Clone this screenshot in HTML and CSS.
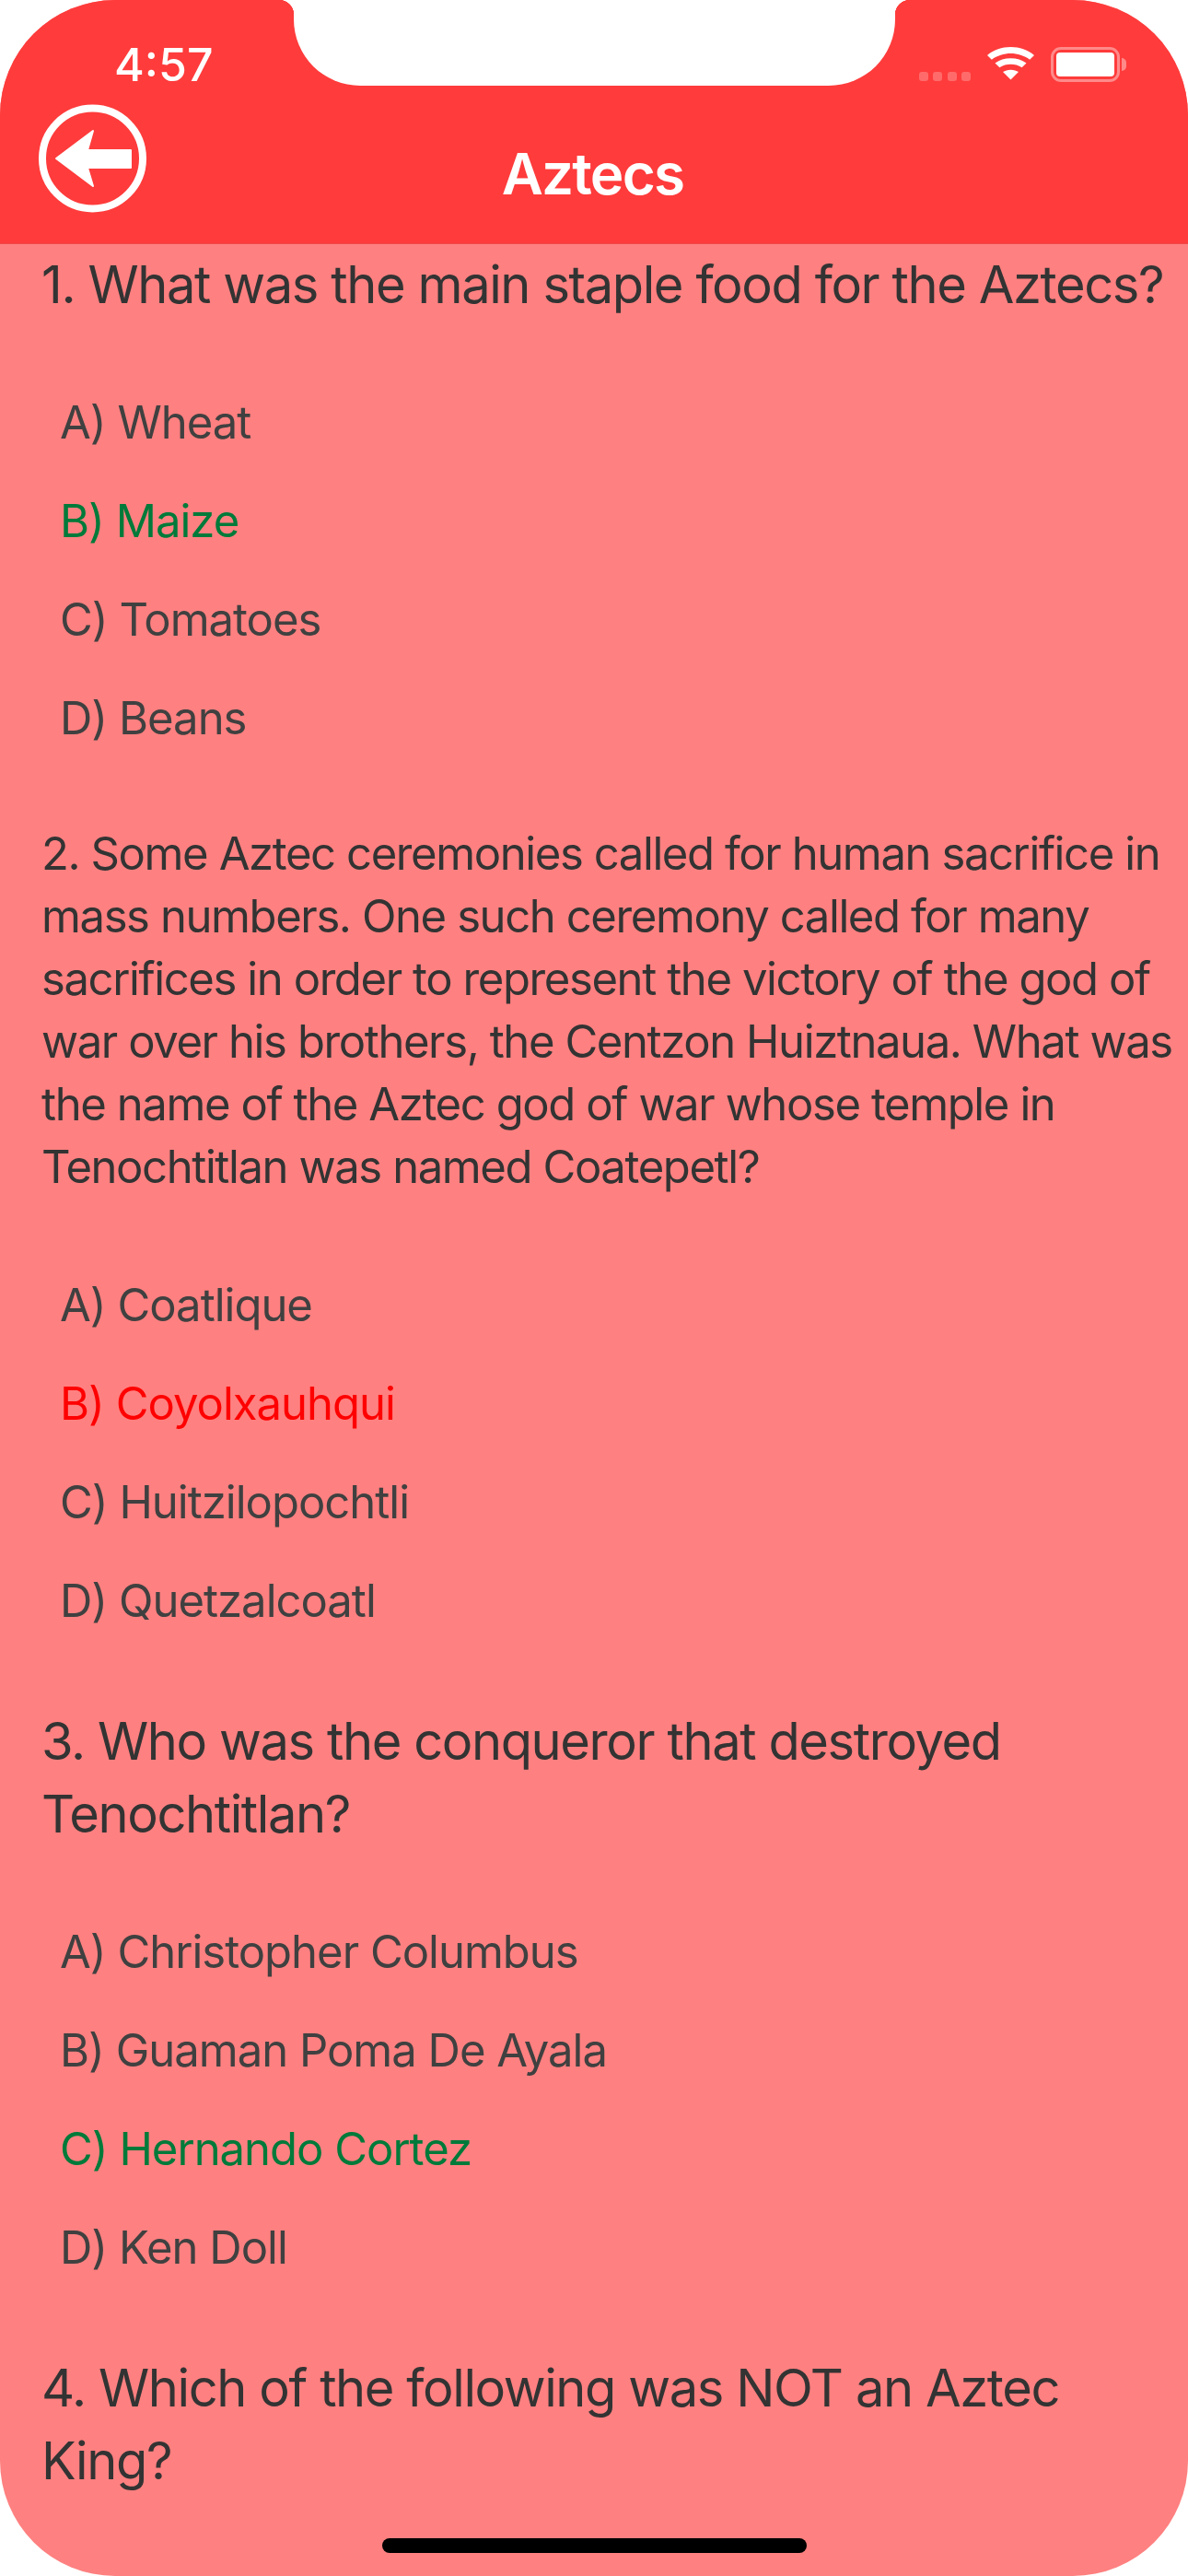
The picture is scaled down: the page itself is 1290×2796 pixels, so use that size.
FILE: index.html
```html
<!DOCTYPE html>
<html lang="en">
<head>
    <meta charset="UTF-8">
    <meta name="viewport" content="width=device-width, initial-scale=1.0">
    <title>Aztecs</title>
    <link rel="stylesheet" href="styles.css">
</head>
<body>
    <div class="phone">
        <div class="header">
            <div class="status-bar">
                <span class="time">4:57</span>
                <div class="status-icons">
                    <div class="signal"><i></i><i></i><i></i><i></i></div>
                    <svg class="wifi" viewBox="0 0 42 38" width="51" height="36" preserveAspectRatio="none">
                        <path fill="#fff" d="M21 0C13 0 6 3 0 9.500L4 14.500C9 10 15 7.500 21 7.500S33 10 38 14.500L42 9.500C36 3 29 0 21 0Z"/>
                        <path fill="#fff" d="M21 13C15.500 13 11 15 7 18.500L11 23.500C14 21 17.500 19.800 21 19.800S28 21 31 23.500L35 18.500C31 15 26.500 13 21 13Z"/>
                        <path fill="#fff" d="M21 26C18 26 16 27 14 28.500L21 37.500L28 28.500C26 27 24 26 21 26Z"/>
                    </svg>
                    <div class="battery"><div class="battery-level"></div></div>
                    <div class="battery-cap"></div>
                </div>
            </div>
            <div class="nav-bar">
                <svg class="back-btn" viewBox="0 0 118 118" width="118" height="118">
                    <circle cx="58.500" cy="59" r="54.500" fill="none" stroke="#fff" stroke-width="8"/>
                    <path fill="#fff" stroke="#fff" stroke-width="2" stroke-linejoin="round" d="M19 59L59 29L53 50H100V69H53L59 89Z"/>
                </svg>
                <h1 class="title">Aztecs</h1>
            </div>
        </div>
        <div class="notch"></div>

        <div class="quiz">
            <div class="question">
                <p class="q-large">1. What was the main staple food for the Aztecs?</p>
                <ul class="answers">
                    <li>A) Wheat</li>
                    <li class="correct">B) Maize</li>
                    <li>C) Tomatoes</li>
                    <li>D) Beans</li>
                </ul>
            </div>
            <div class="question">
                <p class="q-small">2. Some Aztec ceremonies called for human sacrifice in mass numbers. One such ceremony called for many sacrifices in order to represent the victory of the god of war over his brothers, the Centzon Huiztnaua. What was the name of the Aztec god of war whose temple in Tenochtitlan was named Coatepetl?</p>
                <ul class="answers">
                    <li>A) Coatlique</li>
                    <li class="wrong">B) Coyolxauhqui</li>
                    <li>C) Huitzilopochtli</li>
                    <li>D) Quetzalcoatl</li>
                </ul>
            </div>
            <div class="question">
                <p class="q-large">3. Who was the conqueror that destroyed Tenochtitlan?</p>
                <ul class="answers">
                    <li>A) Christopher Columbus</li>
                    <li>B) Guaman Poma De Ayala</li>
                    <li class="correct">C) Hernando Cortez</li>
                    <li>D) Ken Doll</li>
                </ul>
            </div>
            <div class="question">
                <p class="q-large">4. Which of the following was NOT an Aztec King?</p>
            </div>
        </div>
        <div class="home-bar"></div>
    </div>
</body>
</html>
```

FILE: styles.css
```css
html, body {
    margin: 0;
    padding: 0;
    background: #fff;
}
.phone {
    position: relative;
    width: 1290px;
    height: 2796px;
    overflow: hidden;
    border-radius: 125px;
    background: #ff8080;
    font-family: Inter, "Noto Sans", sans-serif;
    color: #333;
}
.header {
    height: 265px;
    box-sizing: border-box;
    background: #ff3b3b;
    border-bottom: 1px solid #f04a4a;
    color: #fff;
}
.status-bar {
    display: flex;
    justify-content: space-between;
    height: 93px;
}
.time {
    margin: 42px 0 0 124px;
    font-size: 50px;
    line-height: 56px;
    font-weight: 500;
}
.status-icons {
    display: flex;
    align-items: flex-start;
    margin: 51px 67px 0 0;
}
.signal {
    display: flex;
    gap: 5.300px;
    margin: 27px 18px 0 0;
}
.signal i {
    width: 10px;
    height: 10px;
    border-radius: 3px;
    background: #ff6b6b;
}
.wifi {
    margin-right: 18px;
}
.battery {
    width: 75px;
    height: 38px;
    box-sizing: border-box;
    padding: 3px;
    border: 3px solid #ff8a8a;
    border-radius: 11px;
}
.battery-level {
    height: 100%;
    border-radius: 4px;
    background: #fff;
}
.battery-cap {
    width: 5px;
    height: 14px;
    margin: 12px 0 0 2px;
    border-radius: 0 5px 5px 0;
    background: #ff8a8a;
}
.nav-bar {
    position: relative;
    height: 171px;
    text-align: center;
}
.back-btn {
    position: absolute;
    left: 42px;
    top: 20px;
}
.title {
    margin: 0;
    padding: 62px 3px 0 0;
    font-size: 62px;
    line-height: 68px;
    font-weight: 600;
    letter-spacing: -1.800px;
}
.notch {
    position: absolute;
    left: 319px;
    top: 0;
    width: 653px;
    height: 93px;
    background: #fff;
    border-radius: 0 0 72px 72px;
}
.notch::before,
.notch::after {
    content: "";
    position: absolute;
    top: 0;
    width: 16px;
    height: 16px;
}
.notch::before {
    left: -16px;
    background: radial-gradient(circle at 0 100%, transparent 16px, #fff 16.500px);
}
.notch::after {
    right: -16px;
    background: radial-gradient(circle at 100% 100%, transparent 16px, #fff 16.500px);
}
.quiz {
    padding: 5px 0 0 45px;
}
.question p {
    margin: 0;
    padding-right: 8px;
}
.q-large {
    font-size: 56px;
    line-height: 79px;
    letter-spacing: -1.400px;
}
.question .q-small {
    margin-bottom: 6px;
    font-size: 49px;
    line-height: 68px;
    letter-spacing: -1.400px;
}
.answers {
    list-style: none;
    margin: 0;
    padding: 56px 0 60px 20px;
    font-size: 49px;
    letter-spacing: -1px;
}
.answers li {
    height: 107px;
    line-height: 107px;
    color: #404040;
}
.answers .correct {
    color: #007a3a;
}
.answers .wrong {
    color: #ff0000;
}
.home-bar {
    position: absolute;
    left: 415px;
    top: 2755px;
    width: 461px;
    height: 16px;
    border-radius: 8px;
    background: #000;
}
```
